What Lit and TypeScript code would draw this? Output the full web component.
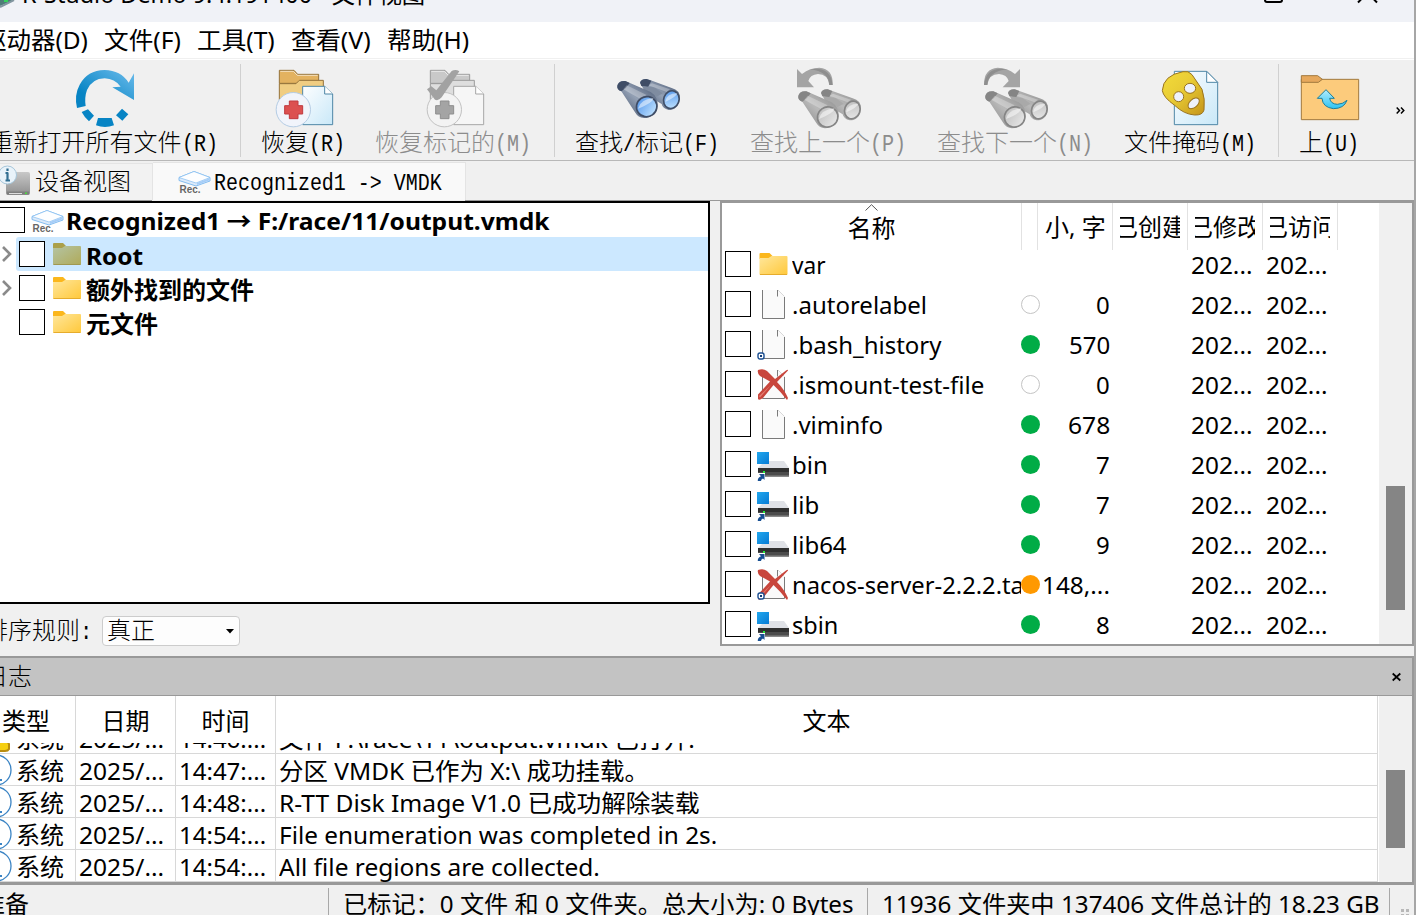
import { LitElement, html, svg, css } from "lit";
import { customElement, property } from "lit/decorators.js";

/** A single line of text condensed or widened to an exact advance width. */
@customElement("fit-text")
class FitText extends LitElement {
  @property({ type: Number }) w = 0;
  @property() text = "";
  static styles = css`
    :host { display: inline-block; white-space: pre; flex: none; text-align: left; }
    span { display: inline-block; transform-origin: 0 50%; }
  `;
  updated() {
    const s = this.renderRoot.querySelector("span") as HTMLElement;
    this.style.width = this.w + "px";
    s.style.transform = `scaleX(${this.w / (s.offsetWidth || this.w)})`;
    s.style.marginRight = `${this.w - s.offsetWidth}px`;
  }
  render() {
    return html`<span>${this.text}</span>`;
  }
}

const fit = (text: string, w: number) => html`<fit-text .text=${text} .w=${w}></fit-text>`;

/** Bitmap-song style label: ideographs are one em wide, Latin half an em. */
const song = (text: string) =>
  html`<span class="song">${(text.match(/[\x20-\x7e]+|[^\x20-\x7e]+/g) || []).map((p) =>
    fit(p, p.charCodeAt(0) < 128 ? p.length * 12 : p.length * 24)
  )}</span>`;

const papers = (gray: boolean) => {
  const c = gray
    ? { a: "#c9c9c9", b: "#dedede", s: "#9a9a9a", p: "#f6f6f6", ps: "#a6a6a6", k: "#f3f3f3", ks: "#c2c2c2", x: "#a4a4a4", xs: "#8e8e8e" }
    : { a: "#e3b260", b: "#f0cd82", s: "#94723a", p: "url(#paper)", ps: "#4f87a6", k: "#f1f4fb", ks: "#b4cce4", x: "#dc5050", xs: "#c03a40" };
  return svg`
    <path d="M838 211H882L893 223H956V250H838Z" fill=${c.a} stroke=${c.s} stroke-width="3"/>
    <path d="M838 251H888L898 241H970V300H838Z" fill=${c.b} stroke=${c.s} stroke-width="3"/>
    <path d="M841 214H880L892 226H953" fill="none" stroke="#fff" stroke-opacity=".6" stroke-width="3"/>
    <path d="M908 259H974L998 282V374H908Z" fill=${c.p} stroke=${c.ps} stroke-width="3"/>
    <path d="M974 259V282H998" fill="#fff" stroke=${c.ps} stroke-width="3"/>
    <circle cx="880" cy="329" r="51.5" fill=${c.k} stroke=${c.ks} stroke-width="3"/>
    <path d="M868 303H894V317H908V342H894V356H868V342H854V317H868Z" fill=${c.x} stroke=${c.xs} stroke-width="3"/>`;
};

const binoculars = (gray: boolean) => {
  const g = gray ? "g" : "b";
  const rim = gray ? "#858585" : "#3f4d66";
  return svg`
    <path d="M480 247Q484 236 500 237L512 241L575 264Q600 270 600 295Q596 330 566 330Q548 326 545 312L500 285Z" fill="url(#tube-${g})"/>
    <path d="M480 248Q484 236 500 237L514 242L504 262L484 258Z" fill=${rim}/>
    <path d="M486 258L523 262L548 280L530 290L500 280Z" fill=${gray ? "#a9a9a9" : "#7f8ca0"}/>
    <path d="M412 256Q416 241 436 243L512 276Q534 290 533 318Q524 354 492 354Q474 352 466 338L424 274Q410 268 412 256Z" fill="url(#tube-${g})"/>
    <path d="M412 257Q416 241 436 243L449 249Q440 264 424 274Q410 270 412 257Z" fill=${rim}/>
    <path d="M440 256L500 285L480 296L430 268Z" fill="#fff" opacity=".28"/>
    <path d="M516 250L570 268L560 276L506 256Z" fill="#fff" opacity=".28"/>
    <ellipse cx="500" cy="320" rx="31" ry="30" transform="rotate(-35 500 320)" fill="url(#lens-${g})" stroke=${rim} stroke-width="5"/>
    <ellipse cx="574" cy="299" rx="23" ry="27" transform="rotate(20 574 299)" fill="url(#lens-${g})" stroke=${rim} stroke-width="5"/>
    <path d="M474 326Q480 298 520 294Q520 308 474 326Z" fill="#fff" opacity=".5"/>
    <path d="M556 306Q558 280 592 280Q590 290 556 306Z" fill="#fff" opacity=".5"/>`;
};

const big = (cx: number, body: unknown) =>
  html`<svg class="big" viewBox="${cx - 96} 204 192 180" width="64" height="60">
    <defs>
      <linearGradient id="blue" x1="0" y1="1" x2="1" y2="0"><stop offset=".25" stop-color="#0784c4"/><stop offset="1" stop-color="#6cbcec"/></linearGradient>
      <linearGradient id="paper" x1="0" y1="0" x2="1" y2="1"><stop offset="0" stop-color="#fdfeff"/><stop offset="1" stop-color="#c9e8f8"/></linearGradient>
      <linearGradient id="tube-b" x1="0" y1="1" x2="1" y2="0"><stop offset="0" stop-color="#35445e"/><stop offset=".5" stop-color="#93a0b4"/><stop offset="1" stop-color="#3c4b66"/></linearGradient>
      <linearGradient id="tube-g" x1="0" y1="1" x2="1" y2="0"><stop offset="0" stop-color="#7d7d7d"/><stop offset=".5" stop-color="#b9b9b9"/><stop offset="1" stop-color="#858585"/></linearGradient>
      <linearGradient id="lens-b" x1="0" y1="0" x2=".4" y2="1"><stop offset="0" stop-color="#4f93ea"/><stop offset="1" stop-color="#b4dafd"/></linearGradient>
      <linearGradient id="lens-g" x1="0" y1="0" x2=".4" y2="1"><stop offset="0" stop-color="#bcbcbc"/><stop offset="1" stop-color="#e2e2e2"/></linearGradient>
      <linearGradient id="gold" x1="0" y1="0" x2="1" y2="1"><stop offset="0" stop-color="#f3dc3a"/><stop offset=".45" stop-color="#e8cb34"/><stop offset="1" stop-color="#c4941a"/></linearGradient>
      <linearGradient id="cyan" x1="0" y1="0" x2="0" y2="1"><stop offset="0" stop-color="#b4ecfc"/><stop offset="1" stop-color="#2cc4f4"/></linearGradient>
    </defs>${body}</svg>`;

const reload = big(315, svg`
  <path d="M231 324Q222 285 239 254Q262 211 314 210Q362 211 386 248L402 220V300L337 262L362 260Q344 236 314 235Q276 236 261 270Q253 292 257 318Z" fill="url(#blue)"/>
  <path d="M245 336L264 328L282 347L267 364Q254 353 245 336ZM294 354H335L342 376Q315 386 288 376ZM366 326L385 343L367 362L348 346Z" fill="#0784c4"/>`);
const recover = big(909, papers(false));
const recoverMarked = big(906, svg`${papers(true)}
  <path d="M828 268L841 259L856 271L902 213Q914 206 925 214L872 292Q862 304 852 299Z" fill="#a2a2a2"/>`);
const find = big(501, binoculars(false));
const findPrev = big(1044, svg`<g transform="translate(543 31)">${binoculars(true)}</g>
  <path d="M951 207L966 222Q990 203 1018 203Q1060 206 1058 255H1048Q1044 222 1014 222Q990 224 985 243L1002 262H951Z" fill="#a4a4a4"/>
  <path d="M990 208Q1052 198 1058 255H1048Q1046 214 990 208Z" fill="#8e8e8e"/>`);
const findNext = big(237, svg`<g transform="translate(-264 31)">${binoculars(true)}</g>
  <path d="M252 207L237 222Q213 203 185 203Q143 206 144 255H154Q158 222 189 222Q213 224 218 243L200 262H252Z" fill="#a4a4a4"/>
  <path d="M213 208Q151 198 144 255H154Q157 214 213 208Z" fill="#8e8e8e"/>`);
const mask = big(762, svg`
  <path d="M715 214H812L845 247V374H715Z" fill="url(#paper)" stroke="#4f87a6" stroke-width="3"/>
  <path d="M812 214V247H845Z" fill="#fff" stroke="#4f87a6" stroke-width="3"/>
  <path d="M741 215Q757 211 768 224L798 268Q808 296 804 330Q800 346 776 345Q744 343 716 316Q682 292 679 272Q681 226 741 215Z" fill="url(#gold)" stroke="#9a7420" stroke-width="3"/>
  <g fill="#eef2fb" stroke="#9a7420" stroke-width="3"><ellipse cx="762" cy="265" rx="17" ry="15"/><ellipse cx="728" cy="290" rx="15" ry="15"/><ellipse cx="773" cy="310" rx="20" ry="12" transform="rotate(-42 773 310)"/></g>`);
const up = big(1179, svg`
  <path d="M1096 238H1268V359H1096Z" fill="#fccb7c" stroke="#a27a3e" stroke-width="3"/>
  <path d="M1096 227H1145L1159 238L1147 247H1096Z" fill="#e6a85c" stroke="#a27a3e" stroke-width="3"/>
  <path d="M1170 269L1195 295H1181Q1184 312 1204 313Q1222 312 1233 301Q1224 326 1192 326Q1160 322 1158 295H1144Z" fill="url(#cyan)" stroke="#1b7f9c" stroke-width="3"/>`);

const rec = html`<svg class="rec" viewBox="0 0 33 24" width="33" height="24">
  <path d="M1 7.5L16 1.5L32 7.5V11L18 16L1 10.5Z" fill="#dceafa" stroke="#84bdf0"/>
  <path d="M1 7.5L16 1.5L32 7.5L18 13Z" fill="#fdfeff" stroke="#84bdf0" stroke-width=".7"/>
  <path d="M19 13L31 8.5V10.5L19 15Z" fill="#a5cdf8"/>
  <text x="1.5" y="23" textLength="21" lengthAdjust="spacingAndGlyphs" class="rectext">Rec.</text></svg>`;

const folder = (sel: boolean) => html`<svg class="ico" viewBox="0 0 32 32" width="32" height="32">
  <defs><linearGradient id=${sel ? "fs" : "fn"} x1="0" y1="0" x2="1" y2="1">
    <stop offset="0" stop-color=${sel ? "#b4c4a4" : "#ffe79c"}/><stop offset="1" stop-color=${sel ? "#b0aa58" : "#ffc83a"}/></linearGradient></defs>
  <path d="M2 5Q2 4 3 4H12L15 7V10H2Z" fill=${sel ? "#aba04a" : "#fbb71c"}/>
  <path d="M2 9H11L14 7H29Q30 7 30 8V25Q30 26 29 26H3Q2 26 2 25Z" fill="url(#${sel ? "fs" : "fn"})"/>
  <path d="M2.5 25.5H29.5" stroke=${sel ? "#a09850" : "#e6ac2c"}/></svg>`;

const sheet = svg`<path d="M5.5 1H20.5L27.5 8V29H6Z" fill="#fafafa"/><path d="M20.5 1V7.5M27.5 8V29.5H5.5V1" fill="none" stroke="#7a7a7a"/><path d="M21 1L27.5 7.5" stroke="#d8d8d8"/>`;
const cross = svg`<path d="M1 1Q6 -1 10 2L18 10L29 1.500Q31 0 31 1.500L20 13Q27 20 31 29L30 31Q23 22 16.500 16L6 29Q2 32 1 30V25.500L13 12.500L3 7Q0 4 1 1Z" fill="#c8463c"/><path d="M14 16L3 28.500L2 27Z" fill="#e47c72"/>`;
const target = svg`<rect x="1" y="24" width="6" height="6" rx="2" fill="#fff" stroke="#1b4f92" stroke-width="1.400"/><rect x="3" y="26" width="2" height="2" fill="#123c78"/>`;
const drive = svg`<defs><linearGradient id="win" x1="0" y1="0" x2="1" y2="1"><stop offset="0" stop-color="#22a8ee"/><stop offset="1" stop-color="#067ad4"/></linearGradient></defs>
  <path d="M1 17L8 10H27L32 17Z" fill="#dfe1e6"/><rect x="1" y="17" width="31" height="9" fill="#4c4c4c"/><rect x="1" y="17" width="31" height="4" fill="#303030"/><rect x="1" y="24.500" width="31" height="1.500" fill="#8a8a8a"/><rect x="6" y="20" width="2" height="4" fill="#22e63a"/><rect x="0" y="1" width="12" height="12" fill="url(#win)"/><rect x="0" y="22" width="8" height="9" fill="#fff"/><path d="M2 23H7.500V29L6 27.500Q4 28 4 30H.8Q.5 26.500 4 25.200Z" fill="#174f92"/>`;

const glyph: Record<string, unknown> = {
  folder: folder(false),
  file: html`<svg class="ico" width="32" height="32">${sheet}</svg>`,
  fileT: html`<svg class="ico" width="32" height="32">${sheet}${target}</svg>`,
  del: html`<svg class="ico" width="32" height="32">${sheet}${cross}</svg>`,
  delT: html`<svg class="ico" width="32" height="32">${sheet}${cross}${target}</svg>`,
  link: html`<svg class="ico drive" width="33" height="32">${drive}</svg>`,
};

const tools = [
  { icon: reload, text: "重新打开所有文件(R)", first: true },
  { sep: true },
  { icon: recover, text: "恢复(R)" },
  { icon: recoverMarked, text: "恢复标记的(M)", off: true },
  { gap: true },
  { sep: true },
  { icon: find, text: "查找/标记(F)" },
  { icon: findPrev, text: "查找上一个(P)", off: true },
  { icon: findNext, text: "查找下一个(N)", off: true },
  { icon: mask, text: "文件掩码(M)" },
  { gap: true },
  { sep: true },
  { icon: up, text: "上(U)" },
] as any[];

const files: [string, string, number, string, string, number][] = [
  ["folder", "var", 34, "", "", 0],
  ["file", ".autorelabel", 135, "empty", "0", 14],
  ["fileT", ".bash_history", 150, "ok", "570", 41],
  ["del", ".ismount-test-file", 192, "empty", "0", 14],
  ["file", ".viminfo", 91, "ok", "678", 42],
  ["link", "bin", 36, "ok", "7", 14],
  ["link", "lib", 27, "ok", "7", 14],
  ["link", "lib64", 55, "ok", "9", 14],
  ["delT", "nacos-server-2.2.2.tar.gz", 270, "warn", "148,...", 68],
  ["link", "sbin", 46, "ok", "8", 14],
];

const log: [string, number, string, number][] = [
  ["14:46:...", 87, "文件 F:\\race\\11\\output.vmdk 已打开.", 416],
  ["14:47:...", 87, "分区 VMDK 已作为 X:\\ 成功挂载。", 370],
  ["14:48:...", 87, "R-TT Disk Image V1.0 已成功解除装载", 420],
  ["14:54:...", 87, "File enumeration was completed in 2s.", 438],
  ["14:54:...", 87, "All file regions are collected.", 321],
];

@customElement("app-root")
class AppRoot extends LitElement {
  static styles = css`
    :host { display: block; width: 1416px; height: 915px; overflow: hidden; background: #a6a6a6;
      font: 24px/32px "Noto Sans", "Noto Sans CJK SC", sans-serif; color: #000; }
    * { box-sizing: border-box; }
    svg { display: block; flex: none; overflow: visible; }
    .window { width: 1414px; height: 915px; background: #f0f0f0; display: flex; flex-direction: column; overflow: hidden; }
    .song { display: inline-flex; white-space: pre; padding-top: 4px; font-family: "Liberation Mono", "Noto Sans CJK SC", monospace; font-weight: 300; }
    .title { height: 22px; background: #f0f2f7; display: flex; align-items: flex-start; overflow: hidden; flex: none; }
    .title fit-text { margin: -22px 0 0 5px; }
    .title .max { margin: -12px 0 0 839px; }
    .title .cls { margin: -12px 0 0 73px; }
    .menu { height: 36px; background: #fff; display: flex; padding: 2px 0 0; flex: none; }
    .menu fit-text:first-child { margin-left: -18px; }
    .menu fit-text + fit-text { margin-left: 16px; }
    .rule { height: 2px; border-top: 1px solid #f0f0f0; background: #fff; flex: none; }
    .tools { height: 101px; border-bottom: 1px solid #b8b8b8; display: grid; flex: none;
      grid-template-columns: 270px 1px 124px 176px 13px 1px 184px 178px 196px 154px 11px 1px 100px 35px; margin-left: -30px; }
    .tool { display: flex; flex-direction: column; align-items: center; padding-top: 8px; }
    .tool .song { margin-top: -3px; }
    .tool.first .song { margin-left: -3px; }
    .off { color: #8c8c8c; }
    .sep { background: #d0d0d0; margin: 4px 0 4px; }
    .more { padding: 47px 0 0 17px; }
    .tabs { height: 39px; display: flex; align-items: flex-end; flex: none; }
    .tab { height: 37px; background: #f2f2f2; display: flex; align-items: center; width: 153px; border-top: 1px solid #e4e4e4; border-right: 1px solid #e4e4e4; }
    .tab .song { margin-left: 5px; }
    .tab.on { width: 313px; height: 38px; background: #f9f9f9; padding-left: 25px; }
    .tab.on .song { margin-left: 3px; }
    .rectext { font: bold 10px "Liberation Sans", sans-serif; fill: #666; }
    .main { height: 446px; display: flex; flex: none; }
    .left { width: 720px; display: flex; flex-direction: column; }
    .tabline { display: flex; height: 1px; }
    .tabline i { background: #999; width: 152px; }
    .tabline i + i { margin-left: 313px; width: 255px; }
    .tree { width: 710px; height: 403px; border: 2px solid #000; border-left: 0; background: #fff; font-weight: 700; }
    .node { height: 34px; display: flex; align-items: center; }
    .node.top svg { margin-left: 6px; margin-top: 2px; }
    .node.top .box { margin-left: -1px; }
    .node.top fit-text { margin: 1px 0 0 2px; }
    .node .twist { width: 16px; height: 34px; display: flex; align-items: center; flex: none; }
    .body { flex: 1; height: 34px; display: flex; align-items: center; padding-left: 3px; }
    .sel { background: #cce8ff; border-radius: 3px 0 0 3px; }
    .body .ico { margin: 1px 0 0 6px; }
    .body fit-text { margin-left: 3px; margin-top: 3px; }
    .box { width: 26px; height: 26px; border: 1px solid #000; background: #fff; flex: none; }
    .sort { display: flex; align-items: center; height: 42px; padding-top: 12px; }
    .sort > .song { margin-left: -16px; width: 118px; overflow: hidden; }
    .combo { width: 138px; height: 30px; border: 1px solid #ccc; border-radius: 4px; background: #fdfdfd; display: flex; align-items: center; justify-content: space-between; padding: 0 5px 0 4px; }
    .list { width: 694px; height: 446px; border: 2px solid #999; border-top-width: 3px; background: #fff; display: flex; }
    .grid { width: 657px; flex: none; }
    .head { height: 47px; display: grid; grid-template-columns: 300px 16px 75px 75px 75px 75px; }
    .head > div { border-right: 1px solid #e2e2e2; padding-top: 8px; overflow: hidden; }
    .head .name { display: flex; flex-direction: column; align-items: center; padding-top: 1px; }
    .head .name fit-text { margin: 1px 0 0 0; }
    .head .clip { display: flex; justify-content: center; width: 60px; margin-left: 7px; overflow: hidden; }
    .head .size { padding-left: 7px; }
    .rows { margin-top: -6px; }
    .row { height: 40px; display: grid; grid-template-columns: 299px 19px 75px 76px 75px 75px; align-items: center; }
    .row .nm { display: flex; align-items: center; overflow: hidden; padding-left: 3px; height: 40px; }
    .row .nm .ico { margin: 2px 0 0 6px; width: 33px; }
    .row .nm .drive { margin-top: 5px; }
    .row .nm fit-text { margin-left: 2px; }
    .row fit-text { margin-top: 1px; }
    .num { display: flex; justify-content: flex-end; padding-right: 5px; }
    .dot { width: 19px; height: 19px; border-radius: 50%; }
    .dot.ok { background: #00ac46; }
    .dot.warn { background: #ff9900; }
    .dot.empty { border: 1px solid #c4c4c4; }
    .bar { width: 33px; background: #f0f0f0; padding-left: 7px; flex: none; }
    .thumb { width: 19px; background: #858585; }
    .bar.a .thumb { margin-top: 283px; height: 124px; }
    .bar.b .thumb { margin-top: 74px; height: 78px; }
    .log { margin-top: 10px; height: 229px; border: solid #999; border-width: 2px 2px 3px 0; display: flex; flex-direction: column; flex: none; }
    .cap { height: 38px; background: #c3c3c3; border-bottom: 1px solid #999; display: flex; align-items: center; justify-content: space-between; padding: 0 11px 0 0; flex: none; }
    .cap .song { margin-left: -16px; }
    .wrap { display: flex; flex: 1; min-height: 0; background: #fff; }
    .table { width: 1379px; flex: none; display: flex; flex-direction: column; overflow: hidden; }
    .lrow { display: grid; grid-template: 32px / 76px 100px 100px 1102px; height: 32px; flex: none; }
    .lrow > div { border-right: 1px solid #d8d8d8; border-bottom: 1px solid #d8d8d8; display: flex; align-items: center; padding-left: 3px; min-height: 0; }
    .lrow > div:first-child { padding-left: 0; }
    .lrow fit-text { margin-top: 3px; }
    .lrow .info { margin-left: -20px; margin-right: 4px; }
    .lhead { height: 47px; grid-template-rows: 47px; }
    .lhead > div, .lhead > div:first-child { border-bottom: 0; justify-content: center; padding: 0; }
    .lhead > div:first-child { padding-right: 23px; }
    .scroll { overflow: hidden; height: 139px; display: flex; flex-direction: column; justify-content: flex-end; }
    .status { height: 30px; display: flex; flex: none; align-items: flex-start; overflow: hidden; }
    .status div { flex: none; }
    .status fit-text { margin-top: 3px; }
    .status i { width: 1px; height: 30px; background: #a8a8a8; margin-top: 3px; flex: none; }
    .status .s1 { margin-left: -19px; width: 347px; }
    .status .s2 { margin-left: 14px; width: 524px; }
    .status .s3 { margin-left: 14px; width: 507px; }
    .status .grip { margin: 24px 0 0 11px; }
  `;

  render() {
    return html`<div class="window">
      <div class="title">
        <svg class="appicon" width="17" height="8"><path d="M0 6L10 2L14 -1H0Z" fill="#4e7d78"/><path d="M0 7L14 0" stroke="#8296a0" stroke-width="2"/><path d="M4 1H8" stroke="#35d25c" stroke-width="2"/></svg>
        ${fit("R-Studio Demo 9.4.191400 - 文件视图", 403)}
        <svg class="max" width="20" height="16"><rect x="1" y="-2" width="17" height="16" rx="2" fill="none" stroke="#000" stroke-width="2"/></svg>
        <svg class="cls" width="22" height="16"><path d="M1 -5L20 14.500M20 -5L1 14.500" stroke="#000" stroke-width="2"/></svg>
      </div>
      <div class="menu">${fit("驱动器(D)", 106)}${fit("文件(F)", 77)}${fit("工具(T)", 78)}${fit("查看(V)", 80)}${fit("帮助(H)", 82)}</div>
      <div class="rule"></div>
      <div class="tools">
        ${tools.map((t) => t.sep ? html`<div class="sep"></div>` : t.gap ? html`<div></div>` :
          html`<div class="tool ${t.off ? "off" : ""} ${t.first ? "first" : ""}">${t.icon}${song(t.text)}</div>`)}
        <div class="more"><svg width="9" height="7" viewBox="0 0 9 7"><path d="M.7 .500L3.500 3.500L.7 6.500M5 .500L7.800 3.500L5 6.500" fill="none" stroke="#000" stroke-width="1.500"/></svg></div>
      </div>
      <div class="tabs">
        <div class="tab">
          <svg width="30" height="30" viewBox="0 0 30 30"><defs><linearGradient id="hd" x1="0" y1="0" x2="0" y2="1"><stop offset="0" stop-color="#c8c8c8"/><stop offset="1" stop-color="#8f8f8f"/></linearGradient></defs>
            <rect x="6" y="5" width="24" height="23" rx="2" fill="url(#hd)"/><path d="M7 26H29" stroke="#7e7e7e" stroke-width="3"/><path d="M9 26.500H22" stroke="#ddd"/><rect x="25" y="25.500" width="2" height="1.500" fill="#4bdc3c"/>
            <circle cx="7.500" cy="8" r="9" fill="#e9f3fa" stroke="#a6c6da"/><path d="M7.500 1.500V4M7.500 5.500V13M5.500 6H8M5.500 13.500H10" stroke="#336f92" stroke-width="2.200"/></svg>
          ${song("设备视图")}
        </div>
        <div class="tab on">${rec}${song("Recognized1 -> VMDK")}</div>
      </div>
      <div class="main">
        <div class="left">
          <div class="tabline"><i></i><i></i></div>
          <div class="tree">
            <div class="node top"><div class="box"></div>${rec}${fit("Recognized1 → F:/race/11/output.vmdk", 484)}</div>
            ${this.node(true, true, "Root", 57)}
            ${this.node(true, false, "额外找到的文件", 168)}
            ${this.node(false, false, "元文件", 72)}
          </div>
          <div class="sort">${song("排序规则:")}
            <div class="combo">${song("真正")}<svg width="8" height="4"><path d="M0 0H8L4 4.500Z"/></svg></div>
          </div>
        </div>
        <div class="list">
          <div class="grid">
            <div class="head">
              <div class="name"><svg width="13" height="7"><path d="M.500 6.500L6.500 .700L12.500 6.500" fill="none" stroke="#555"/></svg>${fit("名称", 48)}</div>
              <div></div>
              <div class="size">${fit("小, 字", 61)}</div>
              ${["已创建", "已修改", "已访问"].map((t) => html`<div><div class="clip">${fit(t, 72)}</div></div>`)}
            </div>
            <div class="rows">${files.map((f) => html`<div class="row">
              <div class="nm"><div class="box"></div>${glyph[f[0]]}${fit(f[1], f[2])}</div>
              <div>${f[3] ? html`<div class="dot ${f[3]}"></div>` : ""}</div>
              <div class="num">${f[4] ? fit(f[4], f[5]) : ""}</div><div></div>
              ${[0, 1].map(() => html`<div>${fit("202...", 61)}</div>`)}
            </div>`)}</div>
          </div>
          <div class="bar a"><div class="thumb"></div></div>
        </div>
      </div>
      <div class="log">
        <div class="cap">${song("日志")}<svg width="9" height="8"><path d="M.700 .500L8.300 7.500M8.300 .500L.700 7.500" stroke="#000" stroke-width="1.700"/></svg></div>
        <div class="wrap">
          <div class="table">
            <div class="lrow lhead"><div>${fit("类型", 48)}</div><div>${fit("日期", 48)}</div><div>${fit("时间", 48)}</div><div>${fit("文本", 48)}</div></div>
            <div class="scroll">${log.map((r, i) => html`<div class="lrow">
              <div><svg class="info" width="32" height="32">${i === 0
                ? svg`<path d="M2 26L16 2L29 22V27Q28 29 25 29H2Z" fill="#f6cf10" stroke="#b98d10" stroke-width="2"/>`
                : svg`<circle cx="16" cy="16" r="15" fill="#fff" stroke="#3b84c4" stroke-width="1.300"/><path d="M13 26H22" stroke="#3b84c4" stroke-width="2"/>`}</svg>${fit("系统", 48)}</div>
              <div>${fit("2025/...", 85)}</div><div>${fit(r[0], r[1])}</div><div>${fit(r[2], r[3])}</div></div>`)}</div>
          </div>
          <div class="bar b"><div class="thumb"></div></div>
        </div>
      </div>
      <div class="status">
        <div class="s1">${fit("准备", 48)}</div><i></i><div class="s2">${fit("已标记：0 文件 和 0 文件夹。总大小为: 0 Bytes", 511)}</div><i></i><div class="s3">${fit("11936 文件夹中 137406 文件总计的 18.23 GB", 498)}</div><i></i>
        <svg class="grip" width="13" height="12"><path d="M0 0H3V3H0ZM5 0H8V3H5ZM0 5H3V8H0ZM5 5H8V8H5Z" fill="#b8b8b8"/></svg>
      </div>
    </div>`;
  }

  private node(twist: boolean, sel: boolean, text: string, w: number) {
    return html`<div class="node"><div class="twist">${twist
      ? html`<svg width="14" height="18"><path d="M3 2L10 9L3 16" fill="none" stroke="#8a8a8a" stroke-width="2.600"/></svg>` : ""}</div>
      <div class="body ${sel ? "sel" : ""}"><div class="box"></div>${folder(sel)}${fit(text, w)}</div></div>`;
  }
}
